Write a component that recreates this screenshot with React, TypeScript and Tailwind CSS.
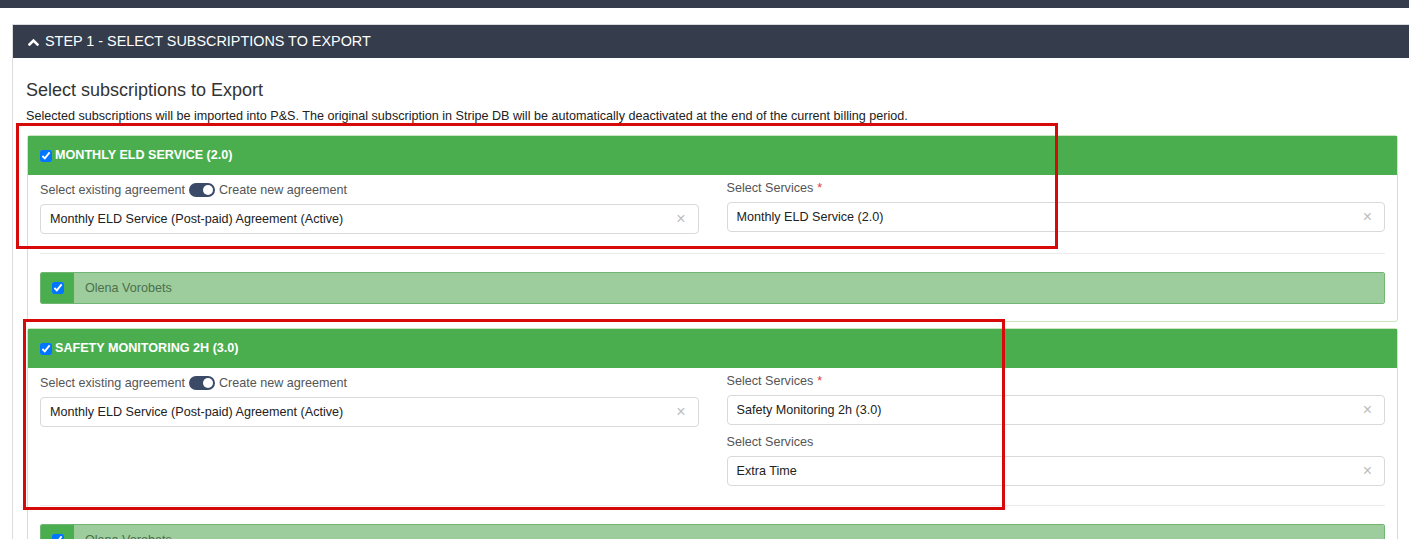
import React from 'react';

const font = { fontFamily: '"Liberation Sans", Arial, sans-serif' };

const Toggle = () => (
  <span className="mx-[4px] inline-flex h-[14px] w-[26px] items-center justify-end rounded-full bg-[#3b4a67] px-[2px]">
    <span className="h-[10px] w-[10px] rounded-full bg-white" />
  </span>
);

const Select = ({ value }: { value: string }) => (
  <div className="flex h-[30px] items-center justify-between rounded-[4px] border border-[#d9d9d9] bg-white pl-[9px] pr-[12px]">
    <span className="text-[12.6px] text-[#222]">{value}</span>
    <span className="text-[16px] leading-none text-[#bdbdbd]">×</span>
  </div>
);

const Label = ({ text, required }: { text: string; required?: boolean }) => (
  <div className="mb-[5px] h-[18px] text-[12.6px] leading-[18px] text-[#555]">
    {text}
    {required && <span className="ml-[4px] text-[#e53935]">*</span>}
  </div>
);

const Subscriber = ({ name }: { name: string }) => (
  <div className="flex h-[32px] overflow-hidden rounded-[2px] border border-[#72b472]">
    <div className="flex w-[33px] items-center justify-center bg-[#4aae4f]">
      <input type="checkbox" checked readOnly className="h-[12px] w-[12px]" />
    </div>
    <div className="flex flex-1 items-center bg-[#9dcd9c] pl-[11px] text-[12.6px] text-[#4c6f4c]">{name}</div>
  </div>
);

type Card = { title: string; agreement: string; services: { label: string; value: string; required?: boolean }[] };

const cards: Card[] = [
  {
    title: 'MONTHLY ELD SERVICE (2.0)',
    agreement: 'Monthly ELD Service (Post-paid) Agreement (Active)',
    services: [{ label: 'Select Services', value: 'Monthly ELD Service (2.0)', required: true }],
  },
  {
    title: 'SAFETY MONITORING 2H (3.0)',
    agreement: 'Monthly ELD Service (Post-paid) Agreement (Active)',
    services: [
      { label: 'Select Services', value: 'Safety Monitoring 2h (3.0)', required: true },
      { label: 'Select Services', value: 'Extra Time' },
    ],
  },
];

const SubscriptionCard = ({ card }: { card: Card }) => (
  <div className="rounded-[3px] border border-[#cbe6be] bg-white">
    <div className="flex h-[39px] items-center gap-[3px] bg-[#4aae4f] px-[12px] text-[12.6px] font-bold text-white">
      <input type="checkbox" checked readOnly className="h-[12px] w-[12px]" />
      <span>{card.title}</span>
    </div>
    <div className="px-[12px] pb-[17px] pt-[5px]">
      <div className="grid grid-cols-2 gap-x-[28px]">
        <div>
          <div className="mb-[4px] flex h-[20px] items-center text-[12.6px] text-[#555]">
            Select existing agreement
            <Toggle />
            Create new agreement
          </div>
          <Select value={card.agreement} />
        </div>
        <div className="-mt-[1px] flex flex-col gap-[8px]">
          {card.services.map((s, i) => (
            <div key={i}>
              <Label text={s.label} required={s.required} />
              <Select value={s.value} />
            </div>
          ))}
        </div>
      </div>
      <div className="mt-[19px] h-px bg-[#ececec]" />
      <div className="mt-[18px]">
        <Subscriber name="Olena Vorobets" />
      </div>
    </div>
  </div>
);

export default function App() {
  return (
    <div className="relative h-[539px] w-[1409px] overflow-hidden bg-white" style={font}>
      <div className="h-[8px] bg-[#353c4b]" />
      <div className="ml-[12px] mt-[16px] w-[1401px] border border-[#dcdcdc]">
        <div className="flex h-[33px] items-center gap-[6px] bg-[#353c4b] pl-[15px] text-[14.4px] text-white">
          <svg width="11" height="8" viewBox="0 0 11 8" fill="none">
            <path d="M1.5 6.5 L5.5 2.5 L9.5 6.5" stroke="white" strokeWidth="2.6" strokeLinecap="square" />
          </svg>
          <span>STEP 1 - SELECT SUBSCRIPTIONS TO EXPORT</span>
        </div>
        <div className="px-[13px] pt-[20px]">
          <div className="text-[18px] leading-[24px] text-[#333]">Select subscriptions to Export</div>
          <div className="mt-[5px] text-[12.6px] leading-[18px] text-[#222]">
            Selected subscriptions will be imported into P&amp;S. The original subscription in Stripe DB will be automatically deactivated at the end of the current billing period.
          </div>
          <div className="mt-[10px] flex flex-col gap-[6px] pl-[1px] pr-[1px]">
            {cards.map((c, i) => (
              <SubscriptionCard key={i} card={c} />
            ))}
          </div>
        </div>
      </div>

      {/* highlight frames drawn over the cards */}
      <div className="pointer-events-none absolute left-[16px] top-[123px] h-[126px] w-[1042px] border-[3px] border-[#d70a0a]" />
      <div className="pointer-events-none absolute left-[23px] top-[319px] h-[191px] w-[982px] border-[3px] border-[#d70a0a]" />
    </div>
  );
}
